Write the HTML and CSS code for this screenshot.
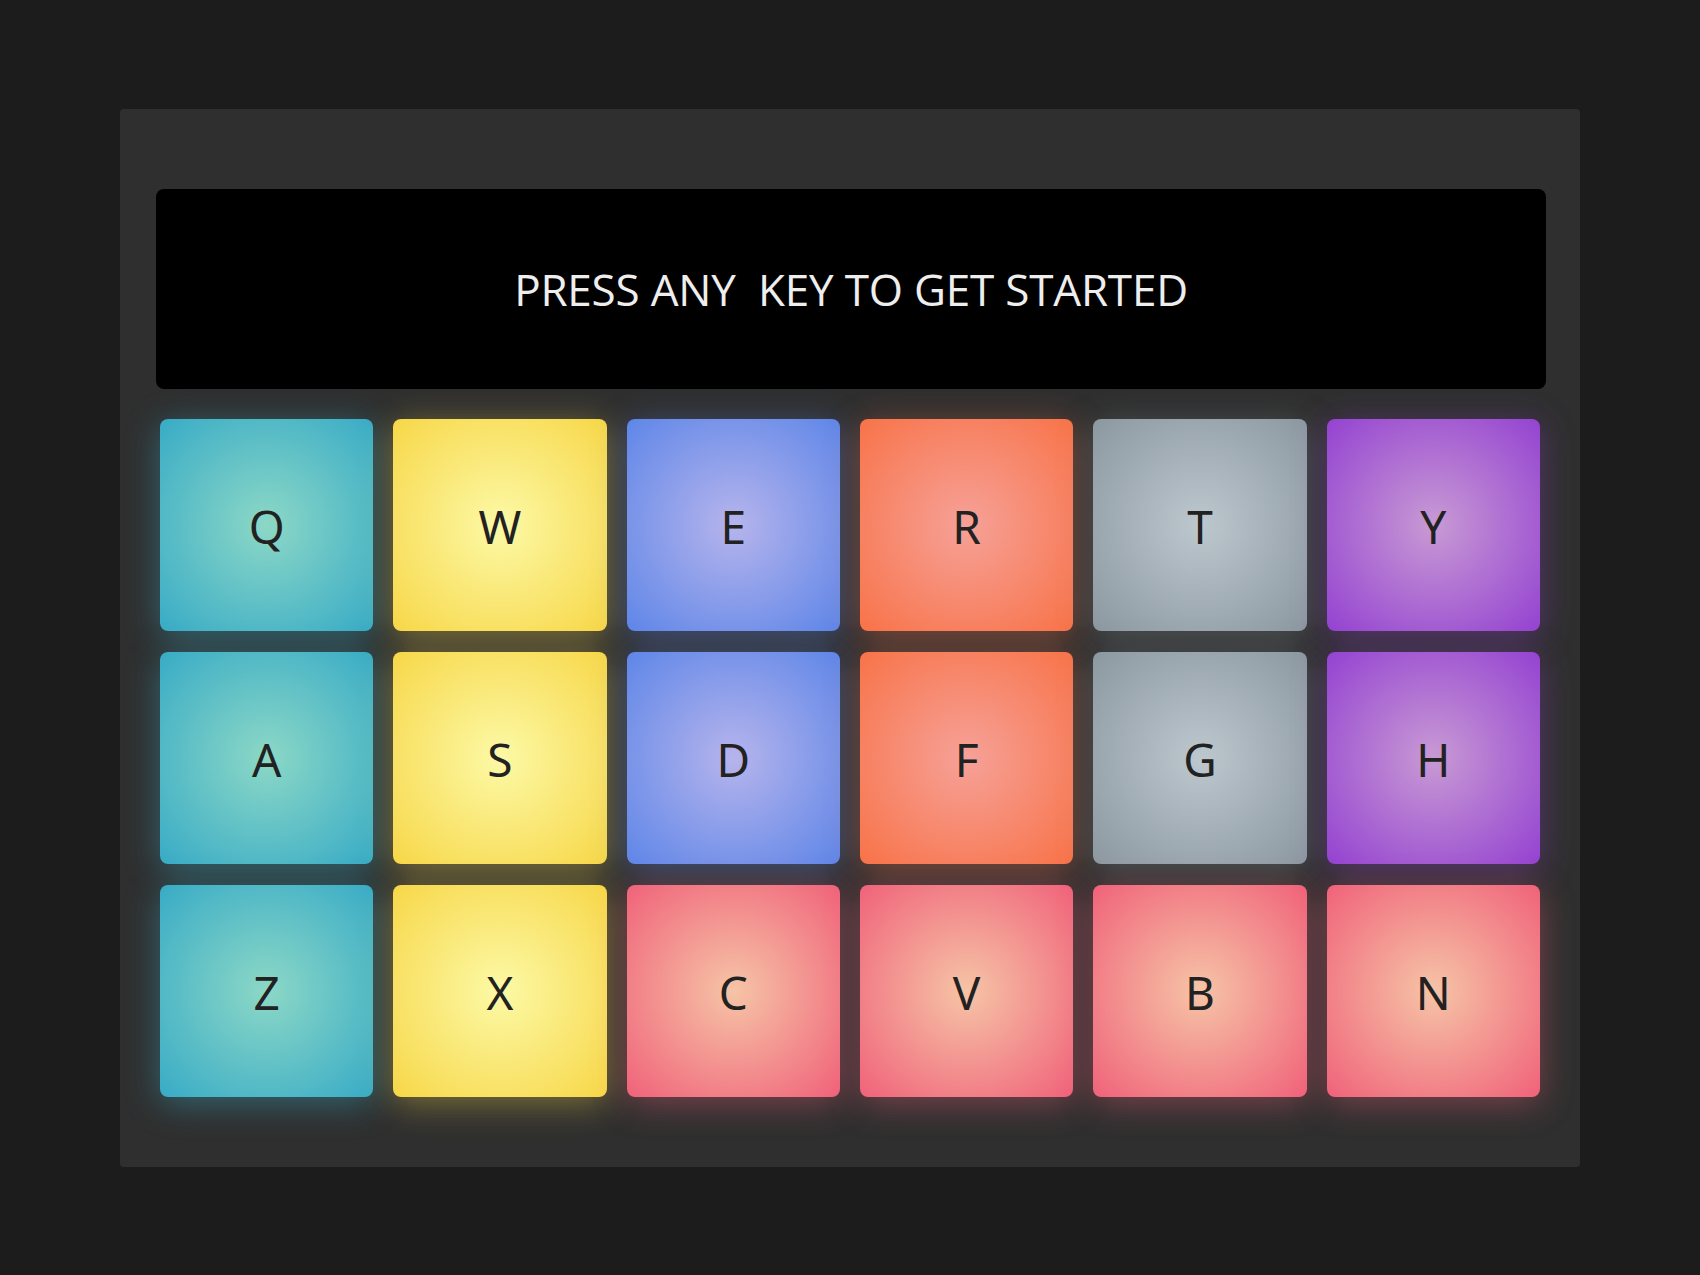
FILE: index.html
```html
<!DOCTYPE html>
<html lang="en">
<head>
<meta charset="utf-8">
<title>Drum Kit</title>
<link rel="stylesheet" href="styles.css">
</head>
<body>
<main class="machine">
  <div class="display">PRESS ANY&nbsp; KEY TO GET STARTED</div>
  <div class="pads">
    <div class="pad cyan">Q</div>
    <div class="pad yellow">W</div>
    <div class="pad blue">E</div>
    <div class="pad orange">R</div>
    <div class="pad gray">T</div>
    <div class="pad purple">Y</div>
    <div class="pad cyan">A</div>
    <div class="pad yellow">S</div>
    <div class="pad blue">D</div>
    <div class="pad orange">F</div>
    <div class="pad gray">G</div>
    <div class="pad purple">H</div>
    <div class="pad cyan">Z</div>
    <div class="pad yellow">X</div>
    <div class="pad pink">C</div>
    <div class="pad pink">V</div>
    <div class="pad pink">B</div>
    <div class="pad pink">N</div>
  </div>
</main>
</body>
</html>
```

FILE: styles.css
```css
html, body {
  margin: 0;
  padding: 0;
  background: #1c1c1c;
  height: 100%;
}

body {
  font-family: "Open Sans", "Noto Sans", sans-serif;
  padding-top: 109px;
  box-sizing: border-box;
}

.machine {
  width: 1460px;
  height: 1058px;
  box-sizing: border-box;
  margin: 0 auto;
  padding: 80px 34px 70px 36px;
  background: #2f2f2f;
  border-radius: 4px;
}

.display {
  height: 200px;
  background: #000;
  border-radius: 8px;
  display: flex;
  align-items: center;
  justify-content: center;
  color: #eeeeee;
  font-size: 44px;
  letter-spacing: -0.2px;
  white-space: pre;
}

.pads {
  margin: 30px 6px 0 4px;
  display: grid;
  grid-template-columns: repeat(6, 1fr);
  grid-auto-rows: 212px;
  column-gap: 20px;
  row-gap: 21px;
}

.pad {
  border-radius: 8px;
  display: flex;
  align-items: center;
  justify-content: center;
  color: #222;
  font-family: "Noto Sans", sans-serif;
  font-size: 46px;
  line-height: 1;
  padding-top: 2px;
}

.cyan {
  background: radial-gradient(circle farthest-corner, #8cd8c6 0%, #38abc6 100%);
  box-shadow: 0 6px 34px rgba(56, 171, 198, 0.45);
}
.yellow {
  background: radial-gradient(circle farthest-corner, #fcf9a6 0%, #f7d748 100%);
  box-shadow: 0 6px 34px rgba(247, 215, 72, 0.4);
}
.blue {
  background: radial-gradient(circle farthest-corner, #b6b4ec 0%, #5e86e8 100%);
  box-shadow: 0 6px 34px rgba(94, 134, 232, 0.4);
}
.orange {
  background: radial-gradient(circle farthest-corner, #f6a198 0%, #f87348 100%);
  box-shadow: 0 6px 34px rgba(248, 115, 72, 0.4);
}
.gray {
  background: radial-gradient(circle farthest-corner, #bcc7ce 0%, #8c98a0 100%);
  box-shadow: 0 6px 34px rgba(140, 152, 160, 0.35);
}
.purple {
  background: radial-gradient(circle farthest-corner, #c89ad4 0%, #9442d1 100%);
  box-shadow: 0 6px 34px rgba(148, 66, 209, 0.4);
}
.pink {
  background: radial-gradient(circle farthest-corner, #f6c4a6 0%, #f0627a 100%);
  box-shadow: 0 6px 34px rgba(240, 98, 122, 0.4);
}
```
